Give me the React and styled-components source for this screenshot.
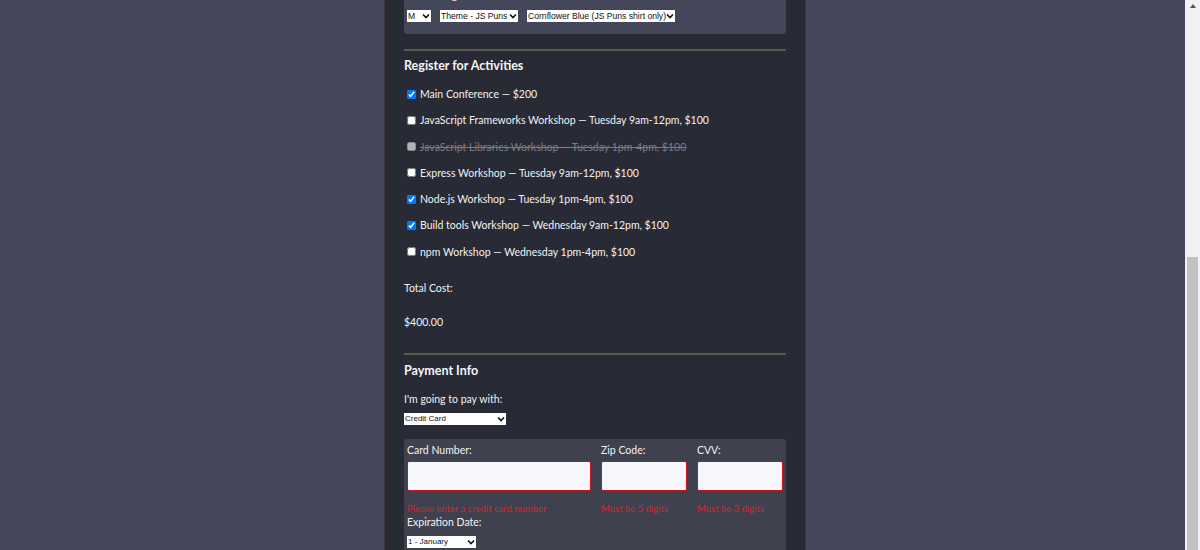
import React from 'react'
import styled, { createGlobalStyle } from 'styled-components'

const GlobalStyle = createGlobalStyle`
  html, body {
    margin: 0;
    padding: 0;
    background: #44475a;
  }
  body {
    font-family: Lato, "Open Sans", sans-serif;
    color: #f2f2f2;
  }
`

const chevron =
  "url(\"data:image/svg+xml;utf8,<svg xmlns='http://www.w3.org/2000/svg' width='8' height='6' viewBox='0 0 8 6'><path d='M1 1.5 L4 4.5 L7 1.5' fill='none' stroke='%23111' stroke-width='1.6'/></svg>\")"

const Screen = styled.div`
  display: flex;
  width: 1200px;
  height: 550px;
  overflow: hidden;
  background: #44475a;
`
const Viewport = styled.div`
  flex: 1;
  display: flex;
  justify-content: center;
  padding-left: 5px;
`
const Column = styled.main`
  width: 382px;
  padding: 0 19px;
  background: #282a36;
  border-left: 1px solid #3e3438;
  border-right: 1px solid #3e3438;
`
const Panel = styled.div`
  background: #44475a;
  border-radius: 0 0 3px 3px;
  padding: 9px 3px 12px;
  margin-top: -20px;
`
const PanelLabel = styled.div`
  font-size: 10.5px;
  line-height: 13px;
  margin-bottom: 8px;
`
const SelectRow = styled.div`
  display: flex;
  gap: 9px;
`
const Select = styled.select`
  appearance: none;
  display: block;
  box-sizing: border-box;
  font-family: Arial, "Liberation Sans", sans-serif;
  font-size: ${p => p.fs || '8.6px'};
  line-height: 12px;
  height: 12px;
  width: ${p => p.w};
  margin-top: ${p => p.top || '0'};
  padding: 0 8px 0 1px;
  border: 0;
  border-radius: 0;
  background: #fff ${chevron} no-repeat right 1px center / 8px 6px;
  color: #111;
`
const Rule = styled.hr`
  border: 0;
  height: 2px;
  background: #5c5a49;
  margin: ${p => p.gap || '15px'} 0 0;
`
const Heading = styled.h2`
  font-size: 12.5px;
  font-weight: 700;
  line-height: 16px;
  margin: ${p => p.gap || '7px'} 0 0;
  color: #f5f5f5;
`
const Activities = styled.div`
  display: grid;
  row-gap: 12.3px;
  margin-top: 13px;
`
const Activity = styled.label`
  display: flex;
  align-items: center;
  gap: 4px;
  padding-left: 3px;
  font-size: 10.5px;
  line-height: 14px;
  color: ${p => (p.disabled ? '#7b7c84' : '#f2f2f2')};
  text-decoration: ${p => (p.disabled ? 'line-through' : 'none')};
`
const Box = styled.input`
  width: 9px;
  height: 9px;
  margin: 0;
  flex: none;
`
const Text = styled.p`
  font-size: 10.5px;
  line-height: 14px;
  margin: ${p => p.gap} 0 0;
`
const CardPanel = styled.div`
  margin-top: 14px;
  background: #3f414e;
  border-radius: 3px;
  padding: 4px 4px 0 3px;
  height: 120px;
`
const CardGrid = styled.div`
  display: grid;
  grid-template-columns: 184px 86px 86px;
  column-gap: 10px;
`
const Field = styled.div`
  display: flex;
  flex-direction: column;
`
const FieldLabel = styled.span`
  display: block;
  font-size: 10.5px;
  line-height: 14px;
`
const Input = styled.input`
  box-sizing: border-box;
  height: 30px;
  margin-top: 4px;
  background: #f6f7fd;
  border: 1.5px solid #c8121a;
  border-radius: 2px;
  outline: none;
`
const ErrorText = styled.span`
  font-size: 9.5px;
  line-height: 12px;
  margin-top: 12px;
  color: #df2222;
`
const Scrollbar = styled.div`
  width: 15px;
  background: #f1f1f1;
  display: flex;
  flex-direction: column;
  align-items: center;
`
const Arrow = styled.div`
  margin-top: 4px;
  width: 0;
  height: 0;
  border-left: 3.5px solid transparent;
  border-right: 3.5px solid transparent;
  border-bottom: 4px solid #505050;
`
const Thumb = styled.div`
  margin-top: 249px;
  width: 11px;
  flex: 1;
  background: #c1c1c1;
`

const activities = [
  { name: 'Main Conference — $200', checked: true },
  { name: 'JavaScript Frameworks Workshop — Tuesday 9am-12pm, $100' },
  { name: 'JavaScript Libraries Workshop — Tuesday 1pm-4pm, $100', disabled: true },
  { name: 'Express Workshop — Tuesday 9am-12pm, $100' },
  { name: 'Node.js Workshop — Tuesday 1pm-4pm, $100', checked: true },
  { name: 'Build tools Workshop — Wednesday 9am-12pm, $100', checked: true },
  { name: 'npm Workshop — Wednesday 1pm-4pm, $100' },
]

export default function App() {
  return (
    <>
      <GlobalStyle />
      <Screen>
        <Viewport>
          <Column>
            <Panel>
              <PanelLabel>Shirt Design:</PanelLabel>
              <SelectRow>
                <Select w="24px" defaultValue="M">
                  <option>S</option>
                  <option>M</option>
                  <option>L</option>
                </Select>
                <Select w="78px" defaultValue="Theme - JS Puns">
                  <option>Theme - JS Puns</option>
                  <option>Theme - I ♥ JS</option>
                </Select>
                <Select w="148px" defaultValue="Cornflower Blue (JS Puns shirt only)">
                  <option>Cornflower Blue (JS Puns shirt only)</option>
                  <option>Dark Slate Grey (JS Puns shirt only)</option>
                </Select>
              </SelectRow>
            </Panel>

            <Rule />
            <Heading>Register for Activities</Heading>
            <Activities>
              {activities.map(a => (
                <Activity key={a.name} disabled={a.disabled}>
                  <Box type="checkbox" defaultChecked={a.checked} disabled={a.disabled} />
                  {a.name}
                </Activity>
              ))}
            </Activities>
            <Text gap="22px">Total Cost:</Text>
            <Text gap="20px">$400.00</Text>

            <Rule gap="24px" />
            <Heading gap="8px">Payment Info</Heading>
            <Text gap="13px">I'm going to pay with:</Text>
            <Select w="102px" fs="8px" top="7px" defaultValue="Credit Card">
              <option>Credit Card</option>
              <option>PayPal</option>
              <option>Bitcoin</option>
            </Select>

            <CardPanel>
              <CardGrid>
                <Field>
                  <FieldLabel>Card Number:</FieldLabel>
                  <Input type="text" />
                  <ErrorText>Please enter a credit card number</ErrorText>
                </Field>
                <Field>
                  <FieldLabel>Zip Code:</FieldLabel>
                  <Input type="text" />
                  <ErrorText>Must be 5 digits</ErrorText>
                </Field>
                <Field>
                  <FieldLabel>CVV:</FieldLabel>
                  <Input type="text" />
                  <ErrorText>Must be 3 digits</ErrorText>
                </Field>
              </CardGrid>
              <FieldLabel>Expiration Date:</FieldLabel>
              <Select w="69px" fs="8px" top="7px" defaultValue="1 - January">
                <option>1 - January</option>
                <option>2 - February</option>
              </Select>
            </CardPanel>
          </Column>
        </Viewport>
        <Scrollbar>
          <Arrow />
          <Thumb />
        </Scrollbar>
      </Screen>
    </>
  )
}
